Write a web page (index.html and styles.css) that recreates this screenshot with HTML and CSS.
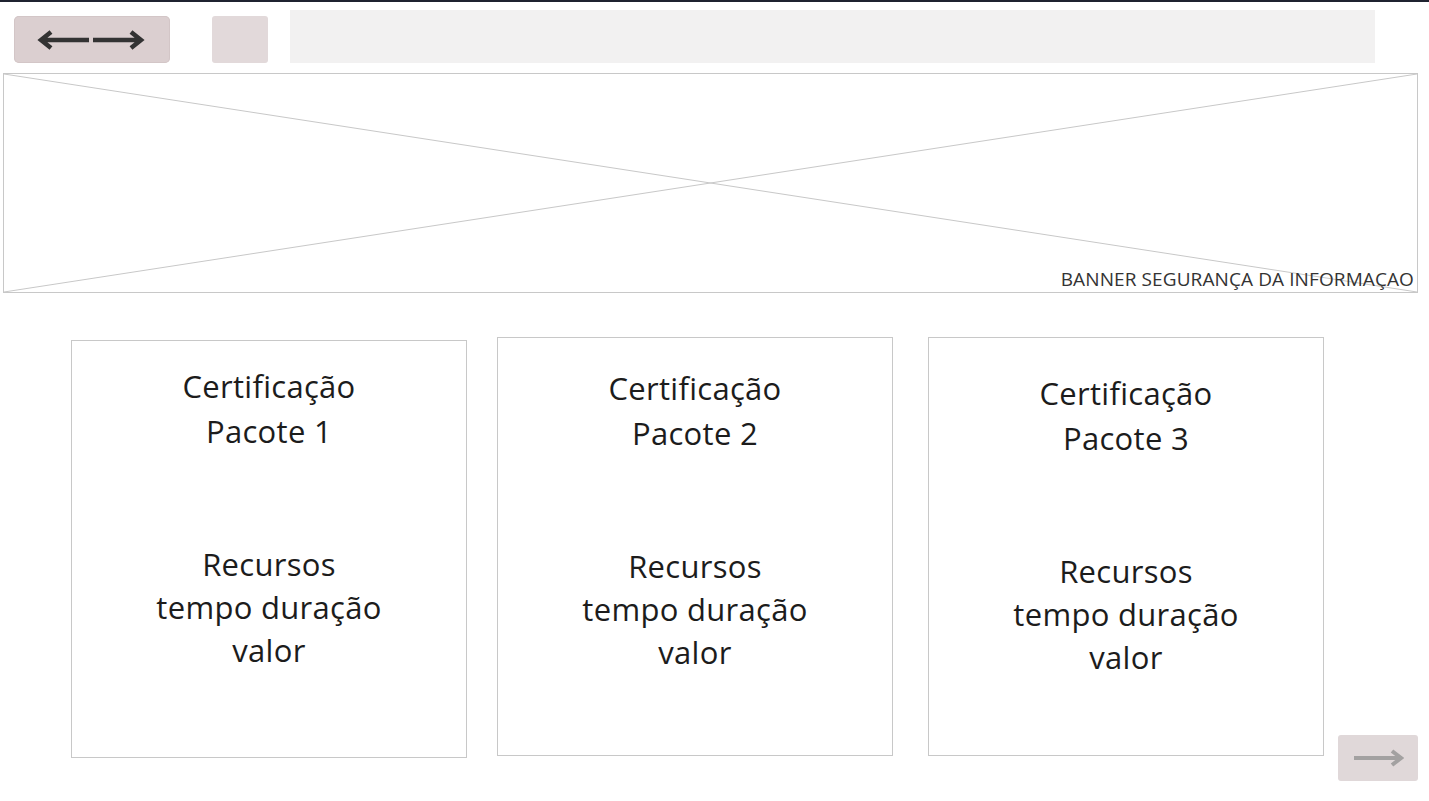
FILE: index.html
```html
<!DOCTYPE html>
<html lang="pt">
<head>
<meta charset="utf-8">
<title>Certificação</title>
<link rel="stylesheet" href="styles.css">
</head>
<body>
<header class="topbar">
  <div class="btn-nav">
    <svg width="108" height="22" viewBox="0 0 108 22">
      <path d="M52 11 H5 M14 3 L4 11 L14 19" fill="none" stroke="#333" stroke-width="4.5"/>
      <path d="M56 11 H103 M94 3 L104 11 L94 19" fill="none" stroke="#333" stroke-width="4.5"/>
    </svg>
  </div>
  <div class="btn-square"></div>
  <div class="search"></div>
</header>
<section class="banner">
  <svg class="banner-x" viewBox="0 0 100 100" preserveAspectRatio="none">
    <line x1="0" y1="0" x2="100" y2="100" stroke="#c8c8c8" stroke-width="1" vector-effect="non-scaling-stroke"/>
    <line x1="100" y1="0" x2="0" y2="100" stroke="#c8c8c8" stroke-width="1" vector-effect="non-scaling-stroke"/>
  </svg>
  <span class="banner-label">BANNER SEGURANÇA DA INFORMAÇAO</span>
</section>
<main class="cards">
  <div class="card card-1">
    <p class="card-title">Certificação<br>Pacote 1</p>
    <p class="card-body">Recursos<br>tempo duração<br>valor</p>
  </div>
  <div class="card card-2">
    <p class="card-title">Certificação<br>Pacote 2</p>
    <p class="card-body">Recursos<br>tempo duração<br>valor</p>
  </div>
  <div class="card card-3">
    <p class="card-title">Certificação<br>Pacote 3</p>
    <p class="card-body">Recursos<br>tempo duração<br>valor</p>
  </div>
  <div class="next-wrap">
    <div class="btn-next">
      <svg width="52" height="20" viewBox="0 0 52 20">
        <path d="M2 10 H48 M40 3 L49 10 L40 17" fill="none" stroke="#a3a1a1" stroke-width="4"/>
      </svg>
    </div>
  </div>
</main>
</body>
</html>
```
FILE: styles.css
```css
html, body {
  margin: 0;
  padding: 0;
  background: #ffffff;
}
body {
  border-top: 2px solid #1f2330;
  font-family: "Open Sans", "Noto Sans", sans-serif;
  color: #1c1c1c;
  width: 1429px;
  height: 799px;
  overflow: hidden;
}
.topbar {
  display: flex;
  align-items: flex-end;
  padding-top: 8px;
  height: 53px;
}
.btn-nav {
  margin-left: 14px;
  width: 156px;
  height: 47px;
  background: #dbcfd0;
  border-radius: 5px;
  display: flex;
  align-items: center;
  justify-content: center;
  box-shadow: inset 0 0 0 1px #d3c6c7;
}
.btn-nav svg { margin-right: 3px; }
.btn-square {
  margin-left: 42px;
  width: 56px;
  height: 47px;
  background: #e2d9da;
  border-radius: 3px;
}
.search {
  margin-left: 22px;
  width: 1085px;
  height: 53px;
  background: #f2f1f1;
}
.banner {
  position: relative;
  margin: 10px 0 0 3px;
  width: 1413px;
  height: 218px;
  border: 1px solid #c8c8c8;
  display: flex;
  justify-content: flex-end;
  align-items: flex-end;
}
.banner-x {
  position: absolute;
  inset: 0;
  width: 100%;
  height: 100%;
}
.banner-label {
  position: relative;
  font-size: 19px;
  color: #333;
  line-height: 22px;
  margin: 0 3px 2px 0;
  letter-spacing: 0.1px;
}
.cards {
  display: flex;
  align-items: flex-start;
  margin-top: 44px;
  padding-left: 71px;
}
.card {
  box-sizing: border-box;
  width: 396px;
  height: 419px;
  border: 1px solid #c8c8c8;
  text-align: center;
  font-size: 31px;
  letter-spacing: 0.3px;
  display: flex;
  flex-direction: column;
  align-items: center;
}
.card p { margin: 0; }
.card-title {
  line-height: 45px;
  margin-top: 23px !important;
}
.card-body {
  line-height: 43px;
  margin-top: 89px !important;
}
.card-1 { margin-top: 3px; height: 418px; }
.card-2 { margin-left: 30px; }
.card-2 .card-title { margin-top: 28px !important; }
.card-3 { margin-left: 35px; }
.card-3 .card-title { margin-top: 33px !important; }
.next-wrap {
  align-self: flex-end;
  margin-left: 14px;
  margin-bottom: -23px;
}
.btn-next {
  width: 80px;
  height: 46px;
  background: #e0d8d9;
  border-radius: 3px;
  display: flex;
  align-items: center;
  justify-content: center;
}
```
